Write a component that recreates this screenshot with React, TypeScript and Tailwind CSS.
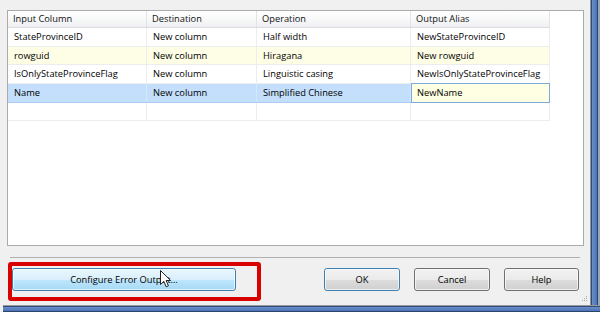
import React from "react";

const cols = [139, 110, 154, 139];
const headers = ["Input Column", "Destination", "Operation", "Output Alias"];
const rows = [
  ["StateProvinceID", "New column", "Half width", "NewStateProvinceID"],
  ["rowguid", "New column", "Hiragana", "New rowguid"],
  ["IsOnlyStateProvinceFlag", "New column", "Linguistic casing", "NewIsOnlyStateProvinceFlag"],
  ["Name", "New column", "Simplified Chinese", "NewName"],
  ["", "", "", ""],
];
const rowH = [19, 18, 19, 19, 18];

function Btn({ label, w, variant }: { label: string; w: number; variant: "normal" | "default" | "hover" }) {
  const base =
    "h-[23px] rounded-[3px] border flex items-center justify-center text-[9.3px] text-black relative overflow-hidden";
  const cls =
    variant === "hover"
      ? "border-[#3c7fb1] bg-[linear-gradient(to_bottom,#eaf6fd_0%,#d9f0fc_50%,#bee6fd_51%,#a7d9f5_100%)]"
      : variant === "default"
      ? "border-[#3c7fb1] bg-[linear-gradient(to_bottom,#f2f2f2_0%,#ebebeb_50%,#dddddd_51%,#cfcfcf_100%)]"
      : "border-[#707070] bg-[linear-gradient(to_bottom,#f2f2f2_0%,#ebebeb_50%,#dddddd_51%,#cfcfcf_100%)]";
  return (
    <div className={`${base} ${cls}`} style={{ width: w }}>
      <div className="absolute inset-0 rounded-[2px] border border-[#fcfcfc]/70" />
      <span className="relative">{label}</span>
    </div>
  );
}

export default function App() {
  return (
    <div
      className="w-[600px] h-[312px] bg-[#f0f0f0] flex flex-col overflow-hidden relative"
      style={{ fontFamily: '"Open Sans", "Noto Sans", sans-serif' }}
    >
      <div className="flex h-[305px]">
        {/* client area */}
        <div className="w-[590px] flex flex-col">
          <div className="ml-[7px] mt-[10px] w-[577px] h-[236px] border border-[#ababab] bg-white">
            <div className="w-[542px] mt-0">
              {/* header */}
              <div className="flex h-[17px] border-b border-[#dcdcdc] bg-[linear-gradient(to_bottom,#ffffff_0%,#fafafa_40%,#eef0f3_100%)]">
                {headers.map((h, i) => (
                  <div
                    key={h}
                    className="h-full flex items-center pl-[5px] text-[9.3px] text-[#111] border-r border-[#e2e4e7]"
                    style={{ width: cols[i] }}
                  >
                    {h}
                  </div>
                ))}
              </div>
              {rows.map((r, ri) => {
                const bg =
                  ri === 1 ? "bg-[#fefee6]" : ri === 3 ? "bg-[#c3dffb]" : "bg-white";
                const border = ri === 3 ? "border-[#a9cdf3]" : "border-[#ededed]";
                return (
                  <div
                    key={ri}
                    className={`flex border-b ${border} ${bg}`}
                    style={{ height: rowH[ri] }}
                  >
                    {r.map((c, ci) => {
                      if (ri === 3 && ci === 3) {
                        return (
                          <div
                            key={ci}
                            className="h-[20px] -mt-[1px] border border-[#7fa9db] bg-[#ffffe3] flex items-center pl-[5px] text-[9.3px] text-black"
                            style={{ width: cols[ci] }}
                          >
                            {c}
                          </div>
                        );
                      }
                      return (
                        <div
                          key={ci}
                          className={`h-full flex items-center pl-[6px] text-[9.3px] text-black border-r ${
                            ri === 3 ? "border-[#d5e7fb]" : "border-[#ededed]"
                          }`}
                          style={{ width: cols[ci] }}
                        >
                          {c}
                        </div>
                      );
                    })}
                  </div>
                );
              })}
            </div>
          </div>
          {/* separator */}
          <div className="ml-[10px] mt-[11px] w-[570px] h-[1px] bg-[#b0b0b0]" />
          {/* buttons */}
          <div className="relative flex items-center mt-[10px] pl-[12px] pr-[11px]">
            <Btn label="Configure Error Output..." w={224} variant="hover" />
            <div className="ml-auto flex gap-[14px]">
              <Btn label="OK" w={76} variant="default" />
              <Btn label="Cancel" w={76} variant="normal" />
              <Btn label="Help" w={75} variant="normal" />
            </div>
            {/* red annotation box */}
            <div className="absolute left-[8px] top-[-6px] w-[253px] h-[39px] border-[4px] border-[#d90000] rounded-[3px]" />
            {/* mouse cursor */}
            <svg
              className="absolute left-[160px] top-[2px]"
              width="12"
              height="18"
              viewBox="0 0 12 18"
            >
              <path
                d="M0.5 0.5 L0.5 14.5 L3.8 11.3 L6.2 16.8 L8.4 15.8 L6.1 10.5 L10.6 10.5 Z"
                fill="#ffffff"
                stroke="#222"
                strokeWidth="1"
                strokeLinejoin="round"
              />
            </svg>
          </div>
        </div>
        {/* right window frame */}
        <div className="flex h-full">
          <div className="w-[1px] bg-[#8a96a8]" />
          <div className="w-[1px] bg-[#2f4c78]" />
          <div className="w-[5px] bg-[linear-gradient(to_right,#6a8fcb,#4c72b3)]" />
          <div className="w-[1px] bg-[#2a4471]" />
          <div className="w-[2px] bg-[#9aa6b8]" />
        </div>
      </div>
      {/* bottom window frame */}
      <div className="flex flex-col pl-[3px] h-[7px]">
        <div className="h-[1px] bg-[#9a9a9a]" />
        <div className="h-[1px] bg-[#2f4c78]" />
        <div className="h-[4px] bg-[linear-gradient(to_bottom,#6a8fcb,#4c72b3)]" />
        <div className="h-[1px] bg-[#2a4471]" />
      </div>
      {/* resize grip */}
      <div className="absolute left-[582px] top-[296px] grid grid-cols-3 gap-[1px]">
        {[0, 0, 1, 0, 1, 1, 1, 1, 1].map((v, i) => (
          <div key={i} className={`w-[1px] h-[1px] ${v ? "bg-[#a8a8a8]" : "bg-transparent"}`} />
        ))}
      </div>
    </div>
  );
}
